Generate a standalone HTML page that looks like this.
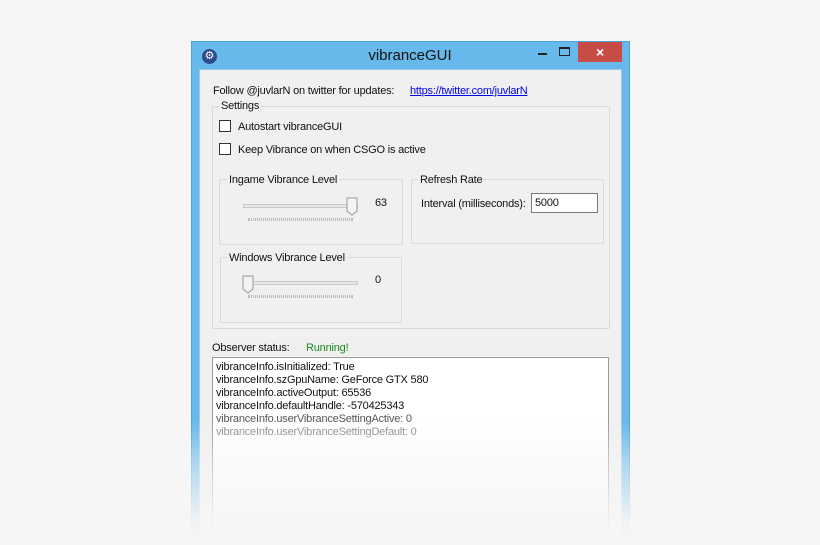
<!DOCTYPE html>
<html style="overflow:hidden;width:820px;height:545px"><head><style>
*{margin:0;padding:0;box-sizing:border-box}
body{width:820px;height:545px;background:#f6f6f6;position:relative;overflow:hidden;font-family:"Liberation Sans",sans-serif;font-size:11px;letter-spacing:-0.2px;color:#111}
.a{position:absolute}
.win{left:191px;top:41px;width:439px;height:504px;background:#66b9ea;border:1px solid #4aa3dc;border-bottom:none}
.client{left:199px;top:69px;width:423px;height:476px;background:#f0f0f0;border:1px solid #a0c8e4;border-bottom:none}
.gb{border:1px solid #d9d9d9;border-radius:2px}
.lbl{background:#f0f0f0;padding:0 2px;white-space:nowrap}
.cb{width:12px;height:12px;border:1px solid #333;background:#fff}
.track{height:4px;border:1px solid #c9c9c9;background:#e7e7e7}
.ticks{height:3px;border-left:1px solid #bbb;border-right:1px solid #bbb;background:repeating-linear-gradient(90deg,#bbb 0 1px,transparent 1px 2px)}
</style></head><body>
<div class="a win"></div>
<div class="a" style="left:578px;top:42px;width:44px;height:20px;background:#c84b46"></div>
<div class="a" style="left:578px;top:42px;width:44px;height:20px;color:#fff;font-size:14px;text-align:center;line-height:20px;font-weight:bold">×</div>
<div class="a" style="left:538px;top:53px;width:9px;height:2px;background:#222"></div>
<div class="a" style="left:559px;top:47px;width:11px;height:9px;border:1px solid #222;border-top-width:2px"></div>
<div class="a" style="left:202px;top:49px;width:15px;height:15px;border-radius:50%;background:#2e4b8c;color:#fff;font-size:11px;line-height:15px;text-align:center">⚙</div>
<div class="a" style="left:0;width:820px;top:47px;text-align:center;font-size:15px;color:#111;letter-spacing:0">vibranceGUI</div>
<div class="a client"></div>
<div class="a" style="left:213px;top:85px">Follow @juvlarN on twitter for updates:</div>
<div class="a" style="left:410px;top:85px;color:#0000ee;text-decoration:underline">https://twitter.com/juvlarN</div>
<div class="a gb" style="left:212px;top:106px;width:398px;height:223px"></div>
<div class="a lbl" style="left:219px;top:100px">Settings</div>
<div class="a cb" style="left:219px;top:120px"></div>
<div class="a" style="left:238px;top:121px">Autostart vibranceGUI</div>
<div class="a cb" style="left:219px;top:143px"></div>
<div class="a" style="left:238px;top:144px">Keep Vibrance on when CSGO is active</div>
<div class="a gb" style="left:219px;top:179px;width:184px;height:66px"></div>
<div class="a lbl" style="left:227px;top:174px">Ingame Vibrance Level</div>
<div class="a track" style="left:243px;top:204px;width:115px"></div>
<svg class="a" style="left:346px;top:197px" width="13" height="19"><path d="M1 1H11V14L6 18L1 14Z" fill="#f3f3f3" stroke="#9a9a9a"/></svg>
<div class="a ticks" style="left:248px;top:218px;width:105px"></div>
<div class="a" style="left:375px;top:197px">63</div>
<div class="a gb" style="left:411px;top:179px;width:193px;height:65px"></div>
<div class="a lbl" style="left:418px;top:174px">Refresh Rate</div>
<div class="a" style="left:421px;top:198px">Interval (milliseconds):</div>
<div class="a" style="left:531px;top:193px;width:67px;height:20px;background:#fff;border:1px solid #7a7a7a;padding:3px 3px">5000</div>
<div class="a gb" style="left:220px;top:257px;width:182px;height:66px"></div>
<div class="a lbl" style="left:227px;top:252px">Windows Vibrance Level</div>
<div class="a track" style="left:243px;top:281px;width:115px"></div>
<svg class="a" style="left:242px;top:275px" width="13" height="19"><path d="M1 1H11V14L6 18L1 14Z" fill="#f3f3f3" stroke="#9a9a9a"/></svg>
<div class="a ticks" style="left:248px;top:295px;width:105px"></div>
<div class="a" style="left:375px;top:274px">0</div>
<div class="a" style="left:212px;top:342px">Observer status:</div>
<div class="a" style="left:306px;top:342px;color:#1a8a1a">Running!</div>
<div class="a" style="left:212px;top:357px;width:397px;height:188px;background:#fff;border:1px solid #9a9a9a;border-bottom:none;padding:3px 3px;line-height:13px">
vibranceInfo.isInitialized: True<br>vibranceInfo.szGpuName: GeForce GTX 580<br>vibranceInfo.activeOutput: 65536<br>vibranceInfo.defaultHandle: -570425343<br><span style="color:#555">vibranceInfo.userVibranceSettingActive: 0</span><br><span style="color:#888">vibranceInfo.userVibranceSettingDefault: 0</span></div>
<div class="a" style="left:0;top:420px;width:820px;height:125px;background:linear-gradient(rgba(246,246,246,0) 0%,rgba(246,246,246,0.5) 35%,rgba(246,246,246,0.95) 80%,#f6f6f6 100%)"></div>
</body></html>
